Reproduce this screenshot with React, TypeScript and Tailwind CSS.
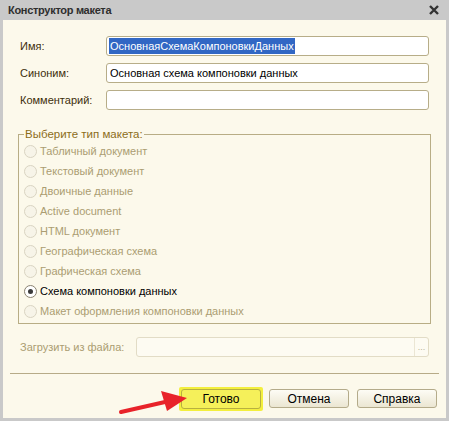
import React from 'react'

const font = { fontFamily: '"Liberation Sans", Arial, sans-serif' }

const items = [
  'Табличный документ',
  'Текстовый документ',
  'Двоичные данные',
  'Active document',
  'HTML документ',
  'Географическая схема',
  'Графическая схема',
  'Схема компоновки данных',
  'Макет оформления компоновки данных',
]

function Radio({ label, checked }: { label: string; checked?: boolean }) {
  return (
    <div className="flex h-[20px] items-center gap-[3px]">
      <span
        className={
          'flex h-[13px] w-[13px] items-center justify-center rounded-full border ' +
          (checked ? 'border-[#8a8270] bg-white' : 'border-[#d9d4c2] bg-[#f7f4e8]')
        }
      >
        {checked && <span className="h-[5px] w-[5px] rounded-full bg-[#3a3a3a]" />}
      </span>
      <span className={checked ? 'text-black' : 'text-[#ab9d72]'}>{label}</span>
    </div>
  )
}

function Field({ label, value, selected }: { label: string; value?: string; selected?: boolean }) {
  return (
    <div className="flex h-[20px] items-center">
      <span className="w-[86px] text-[#3d2f0c]">{label}</span>
      <div className="flex h-[20px] flex-1 items-center rounded-[3px] border border-[#b7ad88] bg-white px-[2px]">
        {value && (
          <span className={selected ? 'bg-[#3167c4] px-[1px] text-white' : 'px-[1px] text-black'}>{value}</span>
        )}
      </div>
    </div>
  )
}

export default function App() {
  return (
    <div
      style={font}
      className="relative flex h-[421px] w-[449px] flex-col overflow-hidden border-x-[3px] border-b-[3px] border-[#c9c9c9] bg-[#fcf9eb] text-[11px]"
    >
      <header className="-mx-[3px] flex h-[20px] shrink-0 items-center justify-between bg-[#c9c9c9] pl-[8px] pr-[10px]">
        <span className="text-[11px] font-bold tracking-[-0.3px] text-[#2e2e2e]">Конструктор макета</span>
        <svg width="10" height="10" viewBox="0 0 10 10">
          <path d="M1 1 L9 9 M9 1 L1 9" stroke="#333" strokeWidth="2.4" />
        </svg>
      </header>

      <div className="flex flex-col px-[17px] pt-[16px]">
        <div className="flex flex-col gap-[7px]">
          <Field label="Имя:" value="ОсновнаяСхемаКомпоновкиДанных" selected />
          <Field label="Синоним:" value="Основная схема компоновки данных" />
          <Field label="Комментарий:" />
        </div>

        <fieldset className="mt-[16px] -ml-[2px] h-[198px] w-[413px] border border-[#b8ad85] pl-[5px] pt-[0px]">
          <legend className="px-[1px] text-[11.5px] text-[#8c6d1a]">Выберите тип макета:</legend>
          <div className="-mt-[2px] flex flex-col">
            {items.map((it) => (
              <Radio key={it} label={it} checked={it === 'Схема компоновки данных'} />
            ))}
          </div>
        </fieldset>

        <div className="mt-[13px] flex h-[20px] items-center">
          <span className="w-[116px] text-[#ab9d72]">Загрузить из файла:</span>
          <div className="flex h-[20px] flex-1 items-center justify-end rounded-[3px] border border-[#e2dcc6] bg-[#fdfbf2]">
            <span className="flex h-full w-[14px] items-center justify-center border-l border-[#ebe6d4] text-[9px] leading-none text-[#b9b09a]">
              ...
            </span>
          </div>
        </div>
      </div>

      <div className="mx-[7px] mt-[16px] h-px bg-[#b7ab88]" />

      <div className="flex justify-end gap-[8px] pr-[9px] pt-[15px]">
        <div className="-m-[2px] rounded-[2px] bg-[#f3ef3e] p-[2px]">
          <button className="flex h-[20px] w-[80px] items-center justify-center rounded-[3px] border border-[#b8b040] bg-[#f5f05a] text-[12px] text-black">
            Готово
          </button>
        </div>
        <button className="flex h-[19px] w-[80px] items-center justify-center rounded-[3px] border border-[#b4ab8a] bg-gradient-to-b from-[#fdfcf5] to-[#ebe6d2] text-[12px] text-black">
          Отмена
        </button>
        <button className="flex h-[19px] w-[80px] items-center justify-center rounded-[3px] border border-[#b4ab8a] bg-gradient-to-b from-[#fdfcf5] to-[#ebe6d2] text-[12px] text-black">
          Справка
        </button>
      </div>

      <svg className="absolute left-0 top-0" width="449" height="421" viewBox="0 0 449 421">
        <path d="M118 412 L162 402" stroke="#e8232a" strokeWidth="4" strokeLinecap="round" />
        <path d="M184 398 L158 391 L164 411 Z" fill="#e8232a" />
      </svg>
    </div>
  )
}
